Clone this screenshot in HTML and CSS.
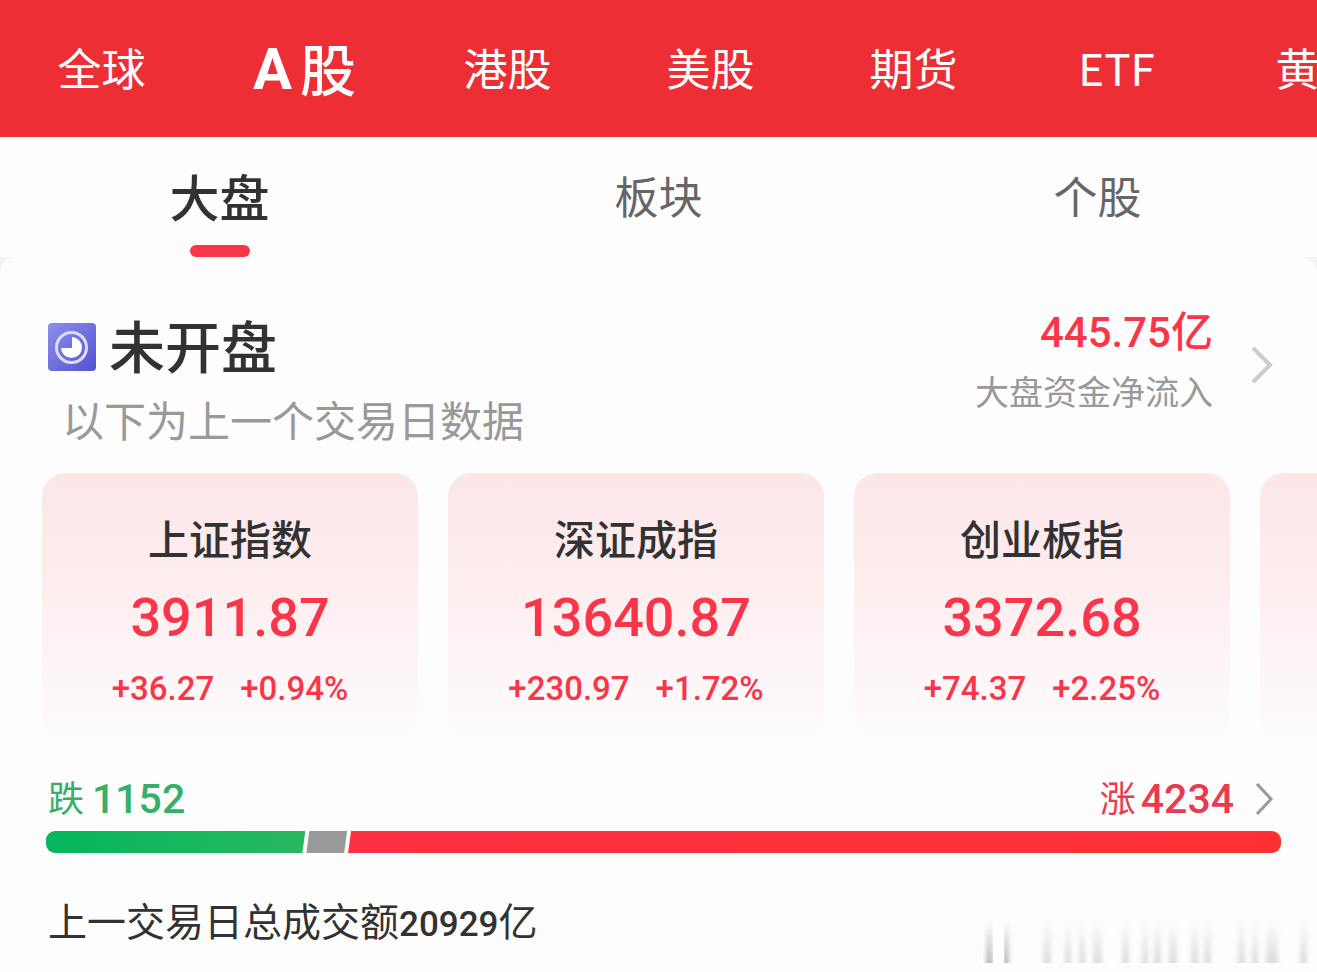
FILE: index.html
```html
<!doctype html>
<html lang="zh-CN">
<head>
<meta charset="utf-8">
<meta name="viewport" content="width=device-width, initial-scale=1">
<title>行情 - A股</title>
<link rel="stylesheet" href="styles.css">
</head>

<body>
<nav class="market">
	<a href="#">全球</a>
	<a href="#" class="on"><span class="en">A</span>股</a>
	<a href="#">港股</a>
	<a href="#">美股</a>
	<a href="#">期货</a>
	<a href="#">ETF</a>
	<a href="#">黄金</a>
</nav>

<nav class="tabs">
	<a href="#" class="on">大盘</a>
	<a href="#">板块</a>
	<a href="#">个股</a>
</nav>

<div class="panel_bg">
<main class="panel">
	<section class="status">
		<div class="state">
			<h1>
				<svg class="clock" viewBox="0 0 48 48" aria-hidden="true">
					<defs>
						<linearGradient id="clockBg" x1="0" y1="0" x2="1" y2="1">
							<stop offset="0" stop-color="#8d8ff0"/>
							<stop offset="1" stop-color="#5452cf"/>
						</linearGradient>
					</defs>
					<rect width="48" height="48" rx="4" fill="url(#clockBg)"/>
					<circle cx="23.500" cy="24.500" r="15" fill="none" stroke="#dedcfb" stroke-width="3"/>
					<path d="M24 14a10.500 10.500 0 1 1-11 11h11z" fill="#fff"/>
				</svg>
				未开盘
			</h1>
			<p>以下为上一个交易日数据</p>
		</div>
		<a href="#" class="flow">
			<span class="flow_txt">
				<strong>445.75亿</strong>
				<span>大盘资金净流入</span>
			</span>
			<svg class="arrow" viewBox="0 0 22 38" aria-hidden="true"><path d="M2 2l17 17L2 36"/></svg>
		</a>
	</section>

	<section class="cards">
		<a href="#" class="card">
			<h2>上证指数</h2>
			<strong>3911.87</strong>
			<p><span>+36.27</span><span>+0.94%</span></p>
		</a>
		<a href="#" class="card">
			<h2>深证成指</h2>
			<strong>13640.87</strong>
			<p><span>+230.97</span><span>+1.72%</span></p>
		</a>
		<a href="#" class="card">
			<h2>创业板指</h2>
			<strong>3372.68</strong>
			<p><span>+74.37</span><span>+2.25%</span></p>
		</a>
		<a href="#" class="card" aria-label="更多指数"></a>
	</section>

	<section class="updown">
		<div class="nums">
			<span class="down">跌<b>1152</b></span>
			<a href="#" class="up">涨<b>4234</b>
				<svg class="arrow" viewBox="0 0 18 34" aria-hidden="true"><path d="M2 2l14 15L2 32"/></svg>
			</a>
		</div>
		<div class="bar">
			<i class="b_down" style="width:21%"></i>
			<i class="b_flat" style="width:3.3%"></i>
			<i class="b_up"></i>
		</div>
	</section>

	<p class="total">上一交易日总成交额<b>20929</b>亿</p>
</main>
</div>

<svg class="mark" viewBox="0 0 334 44" aria-hidden="true">
	<defs>
		<linearGradient id="fade" x1="0" y1="0" x2="0" y2="1">
			<stop offset="0" stop-color="#888" stop-opacity="0"/>
			<stop offset="1" stop-color="#888" stop-opacity=".28"/>
		</linearGradient>
		<linearGradient id="fadeDark" x1="0" y1="0" x2="0" y2="1">
			<stop offset="0" stop-color="#666" stop-opacity="0"/>
			<stop offset="1" stop-color="#666" stop-opacity=".45"/>
		</linearGradient>
		<filter id="soft" x="-10%" y="0" width="120%" height="100%"><feGaussianBlur stdDeviation="2 0"/></filter>
	</defs>
	<g filter="url(#soft)" fill="url(#fade)">
		<path fill="url(#fadeDark)" d="M3 0h7v42H3zM20 0h6v42h-6z"/>
		<path d="M60 0h8v42h-8zM82 0h6v42h-6zM96 0h6v42h-6zM110 0h9v42h-9z"/>
		<path d="M139 0h7v42h-7zM159 0h6v42h-6zM171 0h7v42h-7zM186 0h8v42h-8z"/>
		<path d="M208 0h7v42h-7zM221 0h7v42h-7zM255 0h7v42h-7zM269 0h6v42h-6z"/>
		<path d="M283 0h12v42h-12zM317 0h7v42h-7z"/>
	</g>
	<path d="M10 2h11v40H10z" fill="#fff"/>
</svg>
</body>
</html>
```

FILE: styles.css
```css
* {margin:0; padding:0; box-sizing:border-box;}

body {position:relative; background:#fdfdfd; color:#323232; font-family:"Noto Sans CJK SC",sans-serif; overflow-x:hidden;}
a {color:inherit; text-decoration:none;}
strong, b, .card p, .en {font-family:Roboto,"Noto Sans CJK SC",sans-serif;}

/* 顶部市场 */
.market {display:flex; height:137px; padding-bottom:4px; background:#ed2e35; color:#fff; overflow:hidden;}
.market a {flex:0 0 203px; display:flex; align-items:center; justify-content:center; font-size:44px; white-space:nowrap;}
.market .on {font-size:56px; font-weight:500;}
.market .en {margin-right:8px; padding-top:4px; font-size:58px; font-weight:700;}

/* 二级标签 */
.tabs {display:flex; height:120px;}
.tabs a {flex:1; display:flex; flex-direction:column; align-items:center; justify-content:flex-end; font-size:44px; line-height:60px; padding-bottom:32px; color:#666;}
.tabs .on {color:#323232; font-size:50px; font-weight:500; padding-bottom:0;}
.tabs .on::after {content:""; width:60px; height:12px; margin-top:20px; border-radius:6px; background:#f93549;}

.panel_bg {background:#f3f3f3;}
.panel {padding:48px 0 24px; border-radius:16px 16px 0 0; background:#fdfdfd;}

/* 开盘状态 */
.status {display:flex; justify-content:space-between; padding:0 44px 0 48px;}
.state h1 {display:flex; align-items:center; gap:13px; font-size:56px; line-height:78px; font-weight:500;}
.clock {width:48px; height:48px; margin-top:6px;}
.state p {margin-top:4px; padding-left:14px; color:#999; font-size:42px; line-height:64px;}
.flow {display:flex; align-items:center; gap:38px; height:120px;}
.flow_txt {display:flex; flex-direction:column; padding-bottom:6px; text-align:right; color:#999; font-size:34px; line-height:58px;}
.flow strong {color:#f93549; font-size:42px; font-weight:500;}
.arrow {fill:none; stroke:#ccc; stroke-width:4px;}
.flow .arrow {width:22px; height:38px;}

/* 指数 */
.cards {display:flex; gap:30px; margin-top:22px; padding-left:42px; overflow:hidden;}
.card {flex:0 0 376px; height:267px; padding-top:34px; border-radius:24px; background:linear-gradient(#fce6e8,#fdeef0 45%,#fdfcfd); color:#f93549; text-align:center;}
.card h2 {color:#323232; font-size:41px; line-height:60px; font-weight:500;}
.card strong {display:block; font-size:54px; line-height:102px; font-weight:500;}
.card p {display:flex; justify-content:center; gap:26px; font-size:33px; line-height:40px; font-weight:500;}

/* 涨跌 */
.updown {padding:34px 36px 0 46px;}
.nums {display:flex; justify-content:space-between; padding:0 8px 0 2px; font-size:36px; line-height:44px;}
.nums b {font-size:41px; line-height:50px; font-weight:500;}
.down {display:flex; gap:8px; color:#36b067;}
.up {display:flex; gap:5px; color:#ea3a50;}
.up .arrow {align-self:center; width:18px; height:34px; margin-left:16px; stroke:#999; stroke-width:3px;}
.bar {display:flex; gap:1px; height:22px; margin-top:7px; border-radius:9px; overflow:hidden;}
.bar i {clip-path:polygon(3px 0,100% 0,calc(100% - 3px) 100%,0 100%);}
.bar .b_down {background:linear-gradient(90deg,#04b65c,#28b860); clip-path:polygon(0 0,100% 0,calc(100% - 3px) 100%,0 100%);}
.bar .b_flat {background:#999;}
.bar .b_up {flex:1; background:linear-gradient(90deg,#fd3044,#ff3033); clip-path:polygon(3px 0,100% 0,100% 100%,0 100%);}

.total {margin-top:38px; padding-left:48px; font-size:39px; line-height:56px;}
.total b {font-size:35px; font-weight:500;}

/* 右下角水印 */
.mark {position:absolute; right:0; bottom:12px; width:334px; height:44px;}
```
